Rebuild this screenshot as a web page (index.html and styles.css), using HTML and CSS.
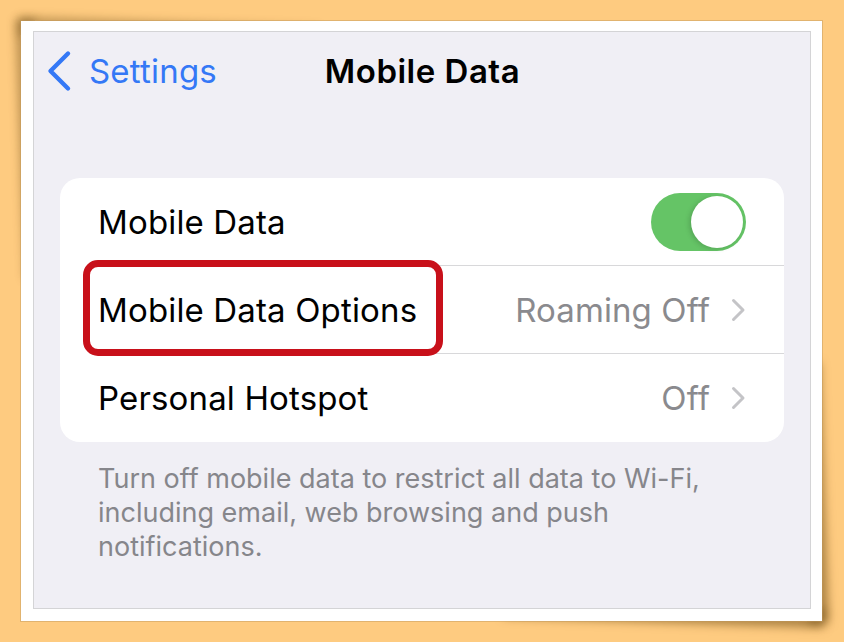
FILE: index.html
```html
<!DOCTYPE html>
<html>
<head>
<meta charset="utf-8">
<link rel="stylesheet" href="styles.css">
</head>
<body>
<div class="frame">
  <div class="panel">
    <div class="nav">
      <div class="back">
        <svg class="back-chev" width="26" height="42" viewBox="0 0 26 42"><path d="M22 3.5 L4.5 21 L22 38.5" fill="none" stroke="#3478f6" stroke-width="4.4" stroke-linecap="round" stroke-linejoin="round"/></svg>
        <span class="back-label">Settings</span>
      </div>
      <div class="title">Mobile Data</div>
      <div></div>
    </div>
    <div class="card">
      <div class="row">
        <div class="row-inner">
          <span class="label">Mobile Data</span>
          <span class="toggle"><span class="knob"></span></span>
        </div>
      </div>
      <div class="row">
        <div class="row-inner">
          <span class="label highlighted">Mobile Data Options<span class="ring"></span></span>
          <span class="value">Roaming Off<svg class="chev" width="16" height="24" viewBox="0 0 16 24"><path d="M3.5 2.5 L13 12 L3.5 21.5" fill="none" stroke="#c4c4c7" stroke-width="3" stroke-linecap="round" stroke-linejoin="round"/></svg></span>
        </div>
      </div>
      <div class="row">
        <div class="row-inner last">
          <span class="label">Personal Hotspot</span>
          <span class="value">Off<svg class="chev" width="16" height="24" viewBox="0 0 16 24"><path d="M3.5 2.5 L13 12 L3.5 21.5" fill="none" stroke="#c4c4c7" stroke-width="3" stroke-linecap="round" stroke-linejoin="round"/></svg></span>
        </div>
      </div>
    </div>
    <p class="footer">Turn off mobile data to restrict all data to Wi-Fi,<br>including email, web browsing and push<br>notifications.</p>
  </div>
</div>
</body>
</html>
```
FILE: styles.css
```css
html, body {
  margin: 0;
  padding: 0;
}
body {
  background: #fecb80;
  width: 844px;
  height: 642px;
  overflow: hidden;
  font-family: Inter, "Noto Sans", sans-serif;
}
.frame {
  position: relative;
  margin: 21px 0 0 21px;
  width: 801px;
  height: 600px;
  box-sizing: border-box;
  padding: 10px 11px 12px 12px;
  background: #ffffff;
  box-shadow: 0 0 0 1px rgba(190, 150, 90, 0.45);
}
/* curled-paper shadows: strips that taper under the frame */
.frame::before {
  content: "";
  position: absolute;
  right: 0;
  bottom: 0;
  width: 320px;
  height: 20px;
  box-shadow: 2px 7px 10px rgba(120, 85, 30, 0.6);
  transform-origin: right bottom;
  transform: rotate(2deg);
  z-index: -1;
}
.frame::after {
  content: "";
  position: absolute;
  right: 0;
  bottom: 0;
  width: 20px;
  height: 260px;
  box-shadow: 7px 2px 10px rgba(120, 85, 30, 0.6);
  transform-origin: right bottom;
  transform: rotate(-2deg);
  z-index: -1;
}
.panel::before {
  content: "";
  position: absolute;
  left: 0;
  top: 0;
  width: 300px;
  height: 20px;
  box-shadow: -2px -5px 9px rgba(120, 85, 30, 0.4);
  transform-origin: left top;
  transform: rotate(2deg);
  z-index: -1;
}
.panel::after {
  content: "";
  position: absolute;
  left: 0;
  top: 0;
  width: 20px;
  height: 260px;
  box-shadow: -6px -2px 9px rgba(120, 85, 30, 0.45);
  transform-origin: left top;
  transform: rotate(-2deg);
  z-index: -1;
}
.panel {
  height: 100%;
  box-sizing: border-box;
  background: #f0eff5;
  border: 1px solid #d4d4d6;
  padding: 0 26px 0 26px;
}
.nav {
  display: grid;
  grid-template-columns: 1fr auto 1fr;
  align-items: center;
  height: 78px;
  margin: 0 -26px;
  padding: 0 11px 0 12px;
}
.back {
  display: flex;
  align-items: center;
  gap: 17px;
}
.back-chev {
  display: block;
}
.back-label {
  color: #3478f6;
  font-size: 33px;
  letter-spacing: 0.2px;
}
.title {
  font-size: 33px;
  font-weight: 600;
  color: #000;
  letter-spacing: 0.5px;
}
.card {
  margin-top: 68px;
  background: #ffffff;
  border-radius: 20px;
}
.row {
  padding-left: 38px;
}
.row-inner {
  height: 88px;
  box-sizing: border-box;
  border-bottom: 1px solid #d8d8da;
  padding-right: 38px;
  display: flex;
  align-items: center;
  justify-content: space-between;
}
.row-inner.last {
  border-bottom: none;
}
.label {
  font-size: 33px;
  color: #000;
  letter-spacing: 0.15px;
}
.highlighted {
  position: relative;
}
.ring {
  position: absolute;
  left: -15px;
  top: -30px;
  right: -26px;
  bottom: -26px;
  border: 7px solid #c8101a;
  border-radius: 15px;
}
.value {
  display: flex;
  align-items: center;
  gap: 20px;
  font-size: 33px;
  color: #8a8a8e;
  letter-spacing: 0.1px;
}
.chev {
  display: block;
}
.toggle {
  width: 95px;
  height: 58px;
  border-radius: 29px;
  background: #65c466;
  display: flex;
  align-items: center;
  justify-content: flex-end;
  padding: 0 3px;
  box-sizing: border-box;
}
.knob {
  width: 52px;
  height: 52px;
  border-radius: 50%;
  background: #fff;
  box-shadow: -2px 1px 5px rgba(0, 0, 0, 0.15);
}
.footer {
  margin: 20px 0 0 38px;
  font-size: 27px;
  line-height: 34px;
  color: #86868b;
  letter-spacing: 0;
}
```
